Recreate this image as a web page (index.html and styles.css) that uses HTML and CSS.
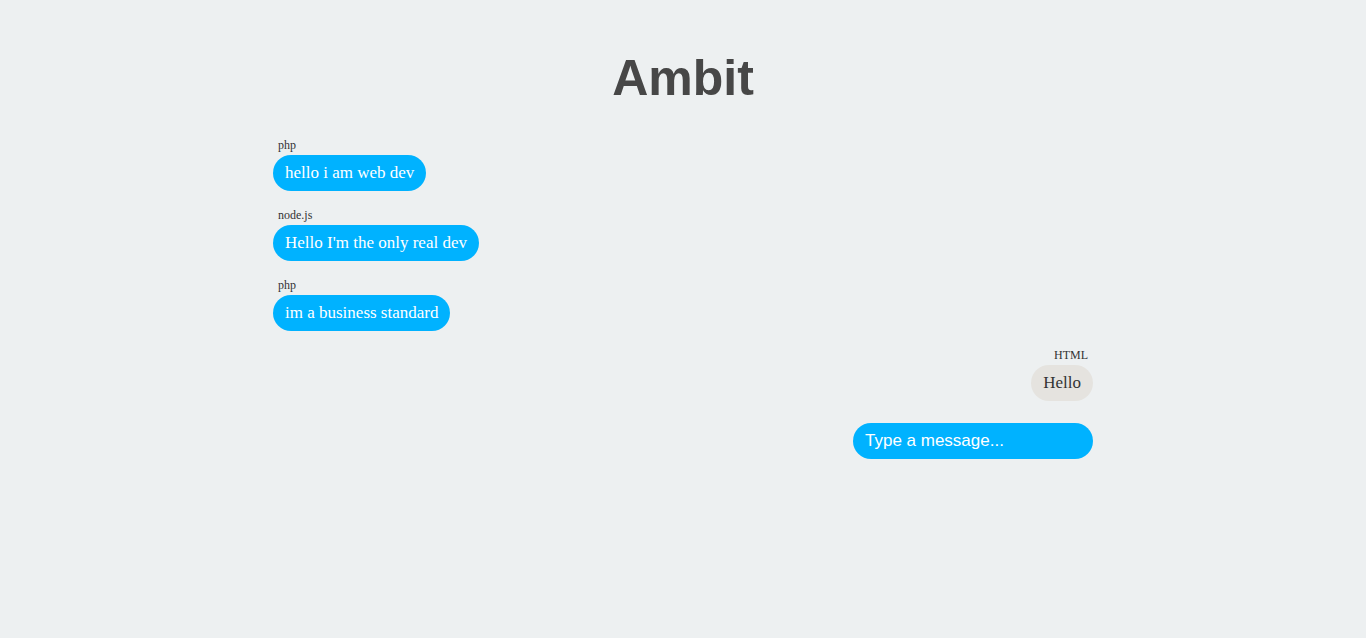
FILE: index.html
```html
<!DOCTYPE html>
<html lang="en">
<head>
  <meta charset="UTF-8" />
  <title>Ambit</title>
  <link rel="stylesheet" href="styles.css">
</head>
<body>
  <h1>Ambit</h1>

  <div class="chat">
    <!-- Message list -->
    <div class="messages">
      <div class="message">
        <div class="sender">php</div>
        <div class="bubble">hello i am web dev</div>
      </div>
      <div class="message">
        <div class="sender">node.js</div>
        <div class="bubble">Hello I'm the only real dev</div>
      </div>
      <div class="message">
        <div class="sender">php</div>
        <div class="bubble">im a business standard</div>
      </div>
      <div class="message own">
        <div class="sender">HTML</div>
        <div class="bubble">Hello</div>
      </div>
    </div>

    <!-- Message input -->
    <form class="send-form" onsubmit="return false">
      <input type="text" class="message-input" placeholder="Type a message..." autofocus>
    </form>
  </div>
</body>
</html>
```

FILE: styles.css
```css
body {
  margin: 0;
  background: #edf0f1;
  font-family: "Liberation Serif", "Times New Roman", serif;
}

h1 {
  font-family: "Liberation Sans", Arial, sans-serif;
  font-size: 50px;
  line-height: 58px;
  color: #474747;
  text-align: center;
  margin: 49px 0 30px;
}

.chat {
  width: 820px;
  margin: 0 auto;
}

.message {
  display: flex;
  flex-direction: column;
  align-items: flex-start;
  margin-bottom: 16px;
}

.message.own {
  align-items: flex-end;
}

.sender {
  font-size: 12px;
  line-height: 16px;
  color: #333;
  padding: 0 5px;
  margin-bottom: 2px;
}

.bubble {
  background-color: #00b2ff;
  color: white;
  font-size: 17px;
  line-height: 20px;
  padding: 8px 12px;
  border-radius: 18px;
}

.message.own .bubble {
  background-color: #e5e3df;
  color: #333;
}

.send-form {
  display: flex;
  justify-content: flex-end;
  margin-top: 22px;
}

.message-input {
  width: 240px;
  height: 36px;
  box-sizing: border-box;
  padding: 0 12px;
  border: none;
  border-radius: 18px;
  background-color: #00b2ff;
  color: white;
  font-family: "Liberation Sans", Arial, sans-serif;
  font-size: 17px;
  outline: none;
}

.message-input::placeholder {
  color: white;
  opacity: 1;
}
```
